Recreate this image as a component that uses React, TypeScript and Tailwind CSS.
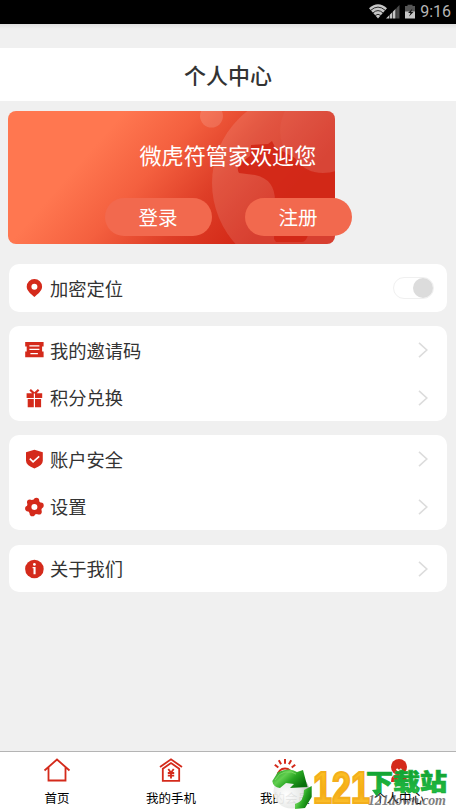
import { useState, type ReactNode } from 'react';
import { clsx } from 'clsx';

const RED = '#d42a1b';

function StatusBar() {
  return (
    <header className="flex h-6 shrink-0 items-center justify-end bg-black pr-[5px]">
      <svg width="46" height="16" viewBox="0 0 46 16" className="mr-[5px]">
        <path d="M0 4.3Q9-3.7 18 4.3L9 14.5Z" fill="#c6c6c6" />
        <path d="M1.6 6.4Q9-.2 16.4 6.4M3.9 9Q9 4.2 14.1 9M6.2 11.5Q9 9 11.8 11.5" fill="none" stroke="#000" strokeWidth=".8" />
        <path d="M17 14.5 27 4.5v10Z" fill="#c6c6c6" />
        <path d="M27 4.5 30.5 1v13.5H27Z" fill="#4a4a4a" />
        <path d="M20.5 5v10M23.5 3v12M26.7 2v13" stroke="#000" strokeWidth=".6" />
        <path d="M36 2h2.5V.7h5V2H46v6H36Z" fill="#555" />
        <path d="M36 7.5h10v7H36Z" fill="#c6c6c6" />
        <path d="m43.5 4.5-4.5 4.5h2.5l-1.5 3.5 4.5-4.5h-2.5Z" fill="#111" />
      </svg>
      <span className="font-[Roboto,sans-serif] text-base leading-6 text-[#b5b5b5]">9:16</span>
    </header>
  );
}

function Banner() {
  return (
    <section className="relative ml-2 mt-[10px] h-[133px] w-[327px] shrink-0">
      <svg className="absolute inset-0 rounded-lg" width="327" height="133" viewBox="0 0 327 133">
        <defs>
          <linearGradient id="banner" gradientUnits="userSpaceOnUse" x1="68" y1="56" x2="205" y2="175">
            <stop offset="0" stopColor="#ff7750" />
            <stop offset=".32" stopColor="#f4603f" />
            <stop offset=".64" stopColor="#de3e27" />
            <stop offset="1" stopColor="#d22514" />
          </linearGradient>
          <clipPath id="moon">
            <circle cx="295" cy="72" r="91" />
          </clipPath>
        </defs>
        <rect width="328" height="134" fill="url(#banner)" />
        <circle cx="203.5" cy="5" r="11.5" fill="#fff" opacity=".14" />
        <g clipPath="url(#moon)">
          <rect x="200" width="128" height="134" fill="#fff" opacity=".12" />
          <circle cx="315" cy="20" r="43" fill="#fff" opacity=".03" />
          <path
            d="m243 34 17-1 4-3 3 6 20 11q10 15 28 15 8 0 13-2v64h-28q-2 7-6 7h-26l-2-3 1-38q0-22-20-26l-16-2q-3-5 1-10l10-7Z"
            fill="#d22615"
            opacity=".9"
          />
        </g>
      </svg>
      <h2 className="relative pl-[131.5px] pt-[27px] text-[22.1px] leading-[32px] text-white">微虎符管家欢迎您</h2>
      <div className="absolute left-[96.5px] top-[87px] flex gap-[33px] text-[19.5px] leading-[38px] text-white">
        <button type="button" className="h-[38px] w-[107px] rounded-full bg-[#f2694e]">登录</button>
        <button type="button" className="h-[38px] w-[107px] rounded-full bg-[#f2694e]">注册</button>
      </div>
    </section>
  );
}

const icons = {
  pin: <path fillRule="evenodd" d="M10 1a7.7 7.7 0 0 0-7.7 7.7C2.3 13 7 16 10 19.1c3-3.1 7.7-6.1 7.7-10.4A7.7 7.7 0 0 0 10 1Zm0 4.8a3 3 0 1 1 0 6 3 3 0 0 1 0-6Z" />,
  ticket: (
    <>
      <path d="M.8 2h18.4v4.6h-1.5v5h1.5v5.6H.8v-5.6h1.5v-5H.8Z" />
      <path d="M5 5.9h10M5 9.4h10M6 13.7h7.5" fill="none" stroke="#fff" strokeWidth="1.3" />
    </>
  ),
  gift: <path d="M2.2 5.2h7.2v4.7H2.2Zm8.4 0h7.2v4.7h-7.2ZM3.3 11h6.1v8.2H3.3Zm7.3 0h6.1v8.2h-6.1ZM8 5.6 5 2.5l1.5-1.6L10 4.2 13.5.9 15 2.5l-3 3.1Z" />,
  shield: (
    <>
      <path d="m10 .7 8.4 2.5v8.6q0 4.8-8.4 7.6-8.4-2.8-8.4-7.6V3.2Z" />
      <path d="m5.4 9.6 3.3 3.3 6.1-5.6" fill="none" stroke="#fff" strokeWidth="1.6" />
    </>
  ),
  gear: (
    <>
      <circle cx="10" cy="10" r="7.6" />
      <circle cx="12" cy="3.6" r="2.8" />
      <circle cx="16.5" cy="8.4" r="2.8" />
      <circle cx="14.6" cy="14.8" r="2.8" />
      <circle cx="8" cy="16.4" r="2.8" />
      <circle cx="3.5" cy="11.6" r="2.8" />
      <circle cx="5.4" cy="5.2" r="2.8" />
      <circle cx="10" cy="10" r="3" fill="#fff" />
    </>
  ),
  info: (
    <>
      <circle cx="10" cy="10" r="9.3" />
      <circle cx="10" cy="5.4" r="1.4" fill="#fff" />
      <path d="M8.2 8h3v7.2H9.1V9.3h-.9Z" fill="#fff" />
    </>
  ),
};

type IconName = keyof typeof icons;

function Row({ icon, label, children }: { icon: IconName; label: string; children?: ReactNode }) {
  return (
    <div className="flex h-[47.5px] items-center pl-[15px] pr-[13px]">
      <svg className="mt-px" width="20" height="20" viewBox="-.4 0 20 20" fill={RED}>
        {icons[icon]}
      </svg>
      <span className="ml-[6px] flex-1 text-[18.3px] leading-7 text-[#333]">{label}</span>
      {children ?? (
        <svg className="mt-px" width="20" height="18" viewBox=".5 0 20 18" fill="none" stroke="#dcdcdc" strokeWidth="1.6">
          <path d="m5.5 1.8 7.8 7.2-7.8 7.2" />
        </svg>
      )}
    </div>
  );
}

function Card({ children, className }: { children: ReactNode; className?: string }) {
  return <section className={clsx('ml-[9px] mr-[9.5px] shrink-0 rounded-[10px] bg-white', className)}>{children}</section>;
}

const tabs = [
  {
    label: '首页',
    icon: <path d="M1.5 12.5 14 1.5l12.5 11M5.5 9.5v13h17v-13" />,
  },
  {
    label: '我的手机',
    icon: (
      <>
        <path d="M3 9 14 1.3 25 9M5.8 10.7v12.1h16.4V10.7L14 5Z" />
        <path d="m11.3 11 2.7 3.7 2.7-3.7M14 14.5v6M10.8 15h6.4M10.8 17.7h6.4" />
      </>
    ),
  },
  {
    label: '我的会员',
    icon: (
      <>
        <path d="M6.5 18a7.5 7.5 0 1 1 15 0" />
        <path d="M14 1v4.7M7.8 2.2l2.3 4M20.2 2.2l-2.3 4M3.8 6.7l3.5 2.9M24.2 6.7l-3.5 2.9" strokeWidth="2" />
      </>
    ),
  },
  {
    label: '个人中心',
    icon: (
      <>
        <circle cx="14" cy="9" r="8" fill={RED} stroke="none" />
        <path d="M7 23q0-6 7-6t7 6Z" fill={RED} />
        <path d="m11.5 11 2.5 2 2.5-2" stroke="#fff" />
      </>
    ),
  },
];

function Watermark() {
  return (
    <div className="pointer-events-none absolute bottom-0 left-[270px] h-[48px] w-[182px]">
      <svg width="182" height="48" viewBox="0 0 182 48">
        <defs>
          <radialGradient id="ball" cx=".35" cy=".6" r=".65">
            <stop offset="0" stopColor="#fff" />
            <stop offset=".65" stopColor="#e6e8e6" />
            <stop offset="1" stopColor="#b4b9b5" />
          </radialGradient>
          <linearGradient id="leaf" x1="0" y1="0" x2="1" y2=".6">
            <stop offset="0" stopColor="#148c16" />
            <stop offset=".4" stopColor="#62cf50" />
            <stop offset=".65" stopColor="#27a522" />
            <stop offset="1" stopColor="#08700c" />
          </linearGradient>
          <linearGradient id="gold" x1="0" y1="0" x2="0" y2="1">
            <stop offset="0" stopColor="#ffc928" />
            <stop offset=".6" stopColor="#f6ad16" />
            <stop offset="1" stopColor="#ffd040" />
          </linearGradient>
          <linearGradient id="green" x1="0" y1="0" x2="0" y2="1">
            <stop offset="0" stopColor="#0b9a2c" />
            <stop offset="1" stopColor="#25bf45" />
          </linearGradient>
        </defs>
        <ellipse cx="21.5" cy="28.5" rx="18" ry="17" fill="url(#ball)" opacity=".93" />
        <path d="M2.3 18 8 9Q20 4 27 9l6-2 4.5 17L20 25l4-4-8-1-6 5q-7-1-7.7-7Z" fill="url(#leaf)" />
        <path d="m34 27 7.7-4v11L35 45l-10 1v-5q9-2 9-14Z" fill="url(#leaf)" />
        <path d="M5 17q4-7 10-8 7-1 11 2" fill="none" stroke="#8de573" strokeOpacity=".65" />
        <text x="43" y="40" fontFamily="Liberation Sans" fontWeight="700" fontSize="45" textLength="57" lengthAdjust="spacingAndGlyphs" fill="url(#gold)" stroke="#f3ae1c" strokeWidth="2.2">
          121
        </text>
        <text x="96" y="27" fontFamily="Noto Sans CJK SC" fontWeight="900" fontSize="22.5" textLength="81" lengthAdjust="spacingAndGlyphs" fill="url(#green)" stroke="#16ac38" strokeWidth=".7">
          下载站
        </text>
        <path d="m102 27 9-1-4 8Z" fill="#1fae3a" />
        <text x="98" y="41.5" fontFamily="Liberation Serif" fontWeight="700" fontStyle="italic" fontSize="14" textLength="78" fill="#555" opacity=".75">
          121down.com
        </text>
      </svg>
    </div>
  );
}

export default function App() {
  const [isHidden, setIsHidden] = useState(true);

  return (
    <div className="relative flex h-[811px] w-[456px] flex-col overflow-hidden bg-[#f0f0f0] font-['Noto_Sans_CJK_SC',sans-serif]">
      <StatusBar />
      <div className="h-6 shrink-0 bg-linear-to-b from-[#e0e0e0] to-[#f0f0f0] to-20%" />
      <h1 className="h-[53px] shrink-0 bg-white text-center text-[22px] font-medium leading-[53px] text-[#333]">个人中心</h1>
      <Banner />

      <Card className="mt-5">
        <Row icon="pin" label="加密定位">
          <button
            type="button"
            role="switch"
            aria-checked={isHidden}
            aria-label="加密定位"
            onClick={() => setIsHidden(!isHidden)}
            className={clsx('flex h-[22px] w-[41px] items-center rounded-full border border-[#f0f0f0]', isHidden && 'justify-end')}
          >
            <span className="size-5 rounded-full bg-[#dcdcdc]" />
          </button>
        </Row>
      </Card>
      <Card className="mt-[14.5px]">
        <Row icon="ticket" label="我的邀请码" />
        <Row icon="gift" label="积分兑换" />
      </Card>
      <Card className="mt-[14px]">
        <Row icon="shield" label="账户安全" />
        <Row icon="gear" label="设置" />
      </Card>
      <Card className="mt-[14.5px]">
        <Row icon="info" label="关于我们" />
      </Card>

      <nav className="mt-auto grid h-[60px] shrink-0 grid-cols-4 border-t border-[#b4b4b4] bg-white">
        {tabs.map((tab) => (
          <button key={tab.label} type="button" className="flex flex-col items-center pt-[6px]">
            <svg width="28" height="26" viewBox="0 0 28 26" fill="none" stroke={RED} strokeWidth="1.8">
              {tab.icon}
            </svg>
            <span className="mt-[5px] text-[12.5px] leading-[18px] text-black">{tab.label}</span>
          </button>
        ))}
      </nav>
      <Watermark />
    </div>
  );
}
